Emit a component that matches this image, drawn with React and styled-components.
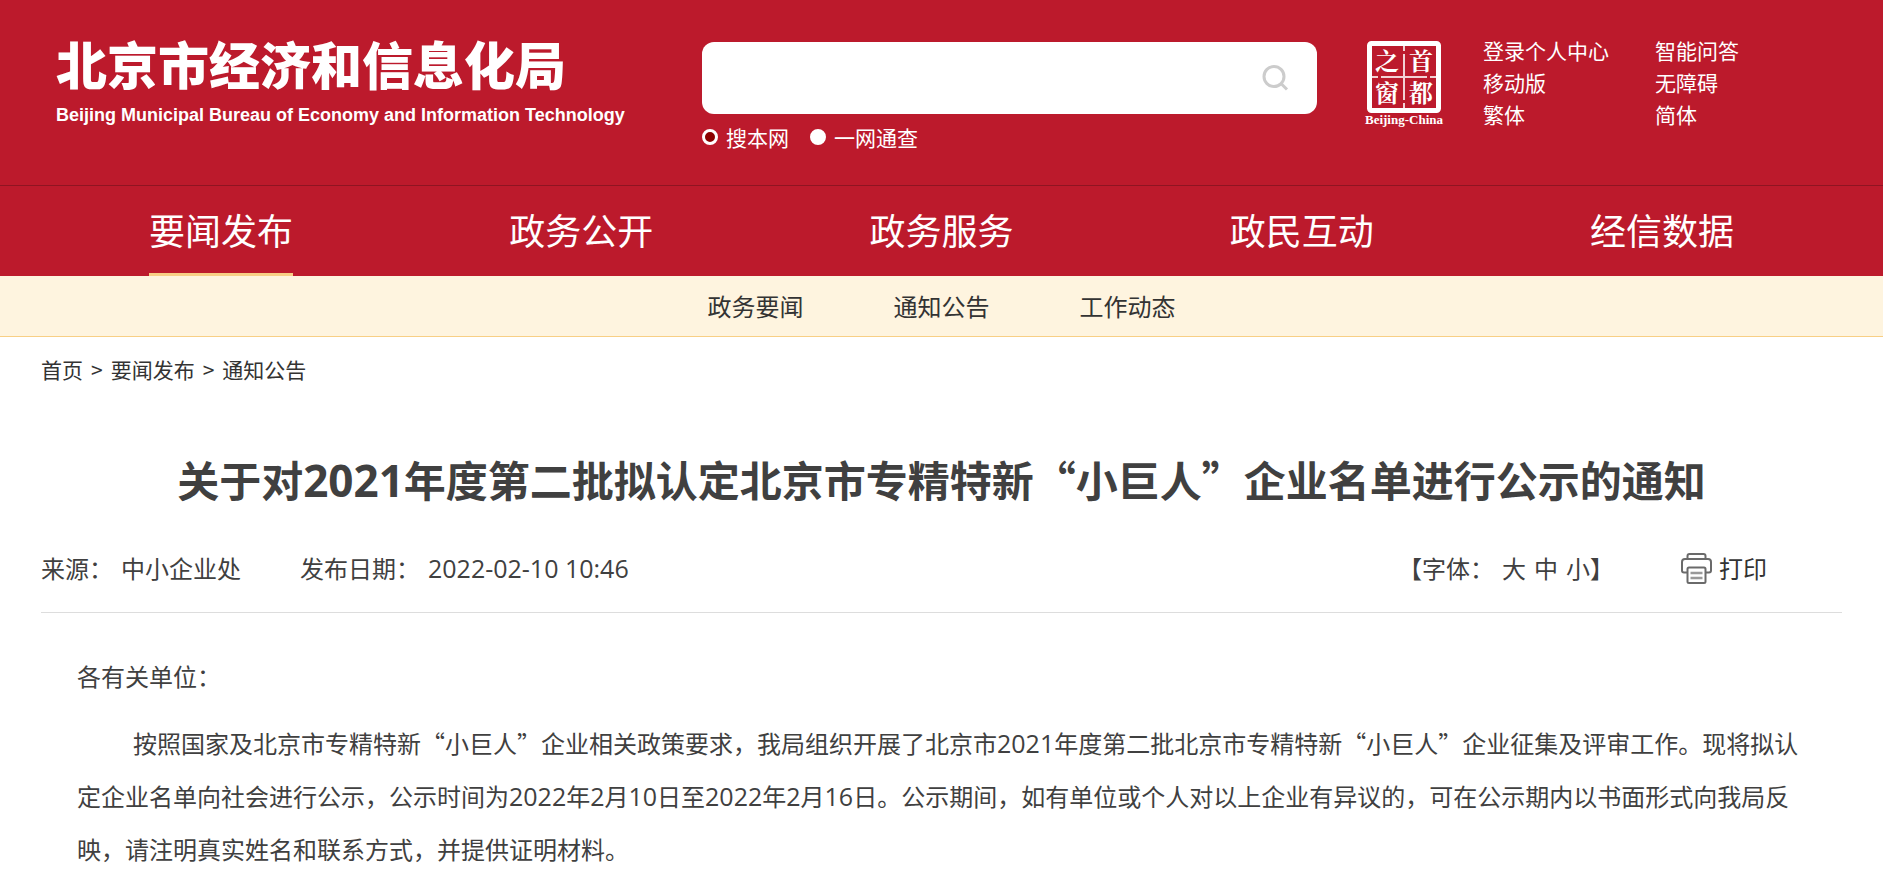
import { useState } from 'react';
import styled, { createGlobalStyle } from 'styled-components';

const GlobalStyle = createGlobalStyle`
  * {
    box-sizing: border-box;
  }

  body {
    margin: 0;

    color: #404040;
    background-color: #fff;

    font-family: 'Noto Sans CJK SC', sans-serif;
    font-size: 24px;
    line-height: 32px;
  }

  a {
    color: inherit;
    text-decoration: none;
  }

  button {
    padding: 0;
    border: 0;

    color: inherit;
    background: none;

    font: inherit;
    cursor: pointer;
  }
`;

const Header = styled.header`
  color: #fff;
  background-color: #bc1a2c;
`;

const HeaderTop = styled.div`
  display: grid;
  grid-template-columns: 646fr 615fr 566fr;

  height: 185px;
  padding: 34px 0 0 56px;
`;

const Brand = styled.a`
  display: flex;
  flex-direction: column;
  gap: 12px;

  padding-top: 3px;
`;

const BrandName = styled.span`
  font-size: 51px;
  font-weight: 900;
  line-height: 52px;
  white-space: nowrap;
`;

const BrandSub = styled.span`
  font-family: 'Liberation Sans', sans-serif;
  font-size: 18px;
  font-weight: 700;
  line-height: 28px;
  white-space: nowrap;
`;

const SearchForm = styled.form`
  display: flex;
  flex-direction: column;
  gap: 8px;

  padding-top: 8px;
`;

const SearchBox = styled.div`
  display: flex;
  align-items: center;

  height: 72px;
  padding: 0 28px;

  border-radius: 12px;
  background-color: #fff;
`;

const SearchInput = styled.input`
  flex: 1;
  min-width: 0;
  height: 48px;

  border: 0;
  outline: 0;

  font: inherit;
`;

const SearchButton = styled.button`
  display: flex;
`;

const Scopes = styled.div`
  display: flex;
  gap: 21px;
`;

const Scope = styled.label`
  display: flex;
  align-items: center;
  gap: 8px;

  font-size: 21px;
  line-height: 30px;
`;

const Radio = styled.input`
  appearance: none;

  height: 16px;
  width: 16px;
  margin: 0;

  border: 3px solid #fff;
  border-radius: 50%;
  background-color: #fff;

  &:checked {
    background-color: #8b0000;
  }
`;

const TopRight = styled.div`
  display: flex;
  align-items: flex-start;
  gap: 38px;

  padding-left: 46px;
`;

const EmblemLink = styled.a`
  display: flex;

  padding-top: 7px;
`;

const Links = styled.div`
  display: grid;
  grid-template-columns: auto auto;
  column-gap: 46px;

  font-size: 21px;
  white-space: nowrap;
`;

const Nav = styled.nav`
  display: grid;
  grid-template-columns: repeat(5, 1fr);
  justify-items: center;

  height: 91px;
  padding: 0 41px;

  border-top: 1px solid #8f1422;
`;

const NavLink = styled.a`
  border-bottom: 3px solid ${(props) => (props.$active ? '#f8cf85' : 'transparent')};

  font-size: 36px;
  line-height: 87px;
`;

const SubNav = styled.nav`
  display: flex;
  justify-content: center;
  gap: 90px;

  border-bottom: 1px solid #f8cf85;
  background-color: #fef4df;

  color: #333;
  line-height: 60px;
`;

const Main = styled.main`
  padding: 0 41px;
`;

const Breadcrumb = styled.nav`
  display: flex;
  gap: 8px;

  padding-top: 16px;

  color: #333;
  font-size: 21px;
`;

const Title = styled.h1`
  margin: 66px 0 0;

  font-size: 42px;
  line-height: 56px;
  text-align: center;
`;

// Latin digits, kept out of the CJK face
const Num = styled.span`
  font-family: 'Open Sans', sans-serif;
  font-size: ${(props) => (props.$large ? '44px' : '25px')};
  line-height: 1;
`;

const Meta = styled.div`
  display: flex;
  align-items: center;
  gap: 59px;

  margin-top: 17px;
  padding: 28px 75px 28px 0;

  border-bottom: 1px solid #ddd;
`;

const MetaItem = styled.div`
  display: flex;
  align-items: baseline;
  gap: 8px;
`;

const FontSizes = styled(MetaItem)`
  margin-left: auto;
  padding-right: 8px;
`;

const PrintButton = styled.button`
  display: flex;
  align-items: center;
  gap: 7px;

  color: #333;
`;

const Body = styled.article`
  padding: 36px 40px 0 36px;

  line-height: 53px;
`;

const Paragraph = styled.p`
  margin: 0 0 14px;

  text-indent: ${(props) => (props.$indent ? '56px' : '0')};
`;

const navItems = ['要闻发布', '政务公开', '政务服务', '政民互动', '经信数据'];
const subNavItems = ['政务要闻', '通知公告', '工作动态'];
const topLinks = ['登录个人中心', '智能问答', '移动版', '无障碍', '繁体', '简体'];
const scopes = ['搜本网', '一网通查'];

const SearchIcon = () => (
  <svg width="28" height="26" viewBox="0 0 28 26" fill="none" stroke="#ccc" strokeWidth="3">
    <circle cx="13" cy="11.500" r="10" />
    <path d="M20 18.500l6 6" />
  </svg>
);

const PrinterIcon = () => (
  <svg width="31" height="31" viewBox="0 0 31 31" fill="none" stroke="#6a6a6a" strokeWidth="2">
    <path d="M6.5 6V3q0-2 2-2h14q2 0 2 2v3" />
    <path d="M6 19.500H3q-2 0-2-2V9q0-3 3-3h23q3 0 3 3v8.500q0 2-2 2h-3" />
    <rect x="6.500" y="14.500" width="18" height="15.500" rx="1.500" />
    <path d="M9.500 20h12M9.500 25h12" stroke="#999" strokeWidth="2.500" />
  </svg>
);

const Emblem = () => (
  <svg width="82" height="88" viewBox="0 0 82 88" role="img" aria-label="首都之窗">
    <rect x="6.500" y="2.500" width="69" height="67" rx="2" fill="none" stroke="#fff" strokeWidth="5" />
    <path d="M41 5v5M41 13v46M41 62v6M9 36h6M18 36h46M67 36h6" stroke="#fff" strokeOpacity="0.8" strokeWidth="2" />
    <g fill="#fff" fontFamily="'Noto Serif CJK SC', 'Noto Sans CJK SC', serif" fontSize="24" fontWeight="700" textAnchor="middle">
      <text x="24" y="29">之</text>
      <text x="58" y="29">首</text>
      <text x="24" y="61">窗</text>
      <text x="58" y="61">都</text>
    </g>
    <text x="41" y="83" fill="#fff" fontFamily="'Liberation Serif', serif" fontSize="13" fontWeight="700" textAnchor="middle">
      Beijing-China
    </text>
  </svg>
);

const App = () => {
  const [scope, setScope] = useState(scopes[0]);

  return (
    <>
      <GlobalStyle />
      <Header>
        <HeaderTop>
          <Brand href="#">
            <BrandName>北京市经济和信息化局</BrandName>
            <BrandSub>Beijing Municipal Bureau of Economy and Information Technology</BrandSub>
          </Brand>
          <SearchForm onSubmit={(e) => e.preventDefault()}>
            <SearchBox>
              <SearchInput type="text" aria-label="搜索" />
              <SearchButton type="submit" aria-label="搜索">
                <SearchIcon />
              </SearchButton>
            </SearchBox>
            <Scopes>
              {scopes.map((item) => (
                <Scope key={item}>
                  <Radio type="radio" name="scope" checked={scope === item} onChange={() => setScope(item)} />
                  {item}
                </Scope>
              ))}
            </Scopes>
          </SearchForm>
          <TopRight>
            <EmblemLink href="#">
              <Emblem />
            </EmblemLink>
            <Links>
              {topLinks.map((item) => (
                <a key={item} href="#">
                  {item}
                </a>
              ))}
            </Links>
          </TopRight>
        </HeaderTop>
        <Nav>
          {navItems.map((item, index) => (
            <NavLink key={item} href="#" $active={index === 0}>
              {item}
            </NavLink>
          ))}
        </Nav>
      </Header>
      <SubNav>
        {subNavItems.map((item) => (
          <a key={item} href="#">
            {item}
          </a>
        ))}
      </SubNav>
      <Main>
        <Breadcrumb>
          <a href="#">首页</a>
          <span>&gt;</span>
          <a href="#">要闻发布</a>
          <span>&gt;</span>
          <a href="#">通知公告</a>
        </Breadcrumb>
        <Title>
          关于对<Num $large>2021</Num>年度第二批拟认定北京市专精特新“小巨人”企业名单进行公示的通知
        </Title>
        <Meta>
          <MetaItem>
            <span>来源：</span>
            <span>中小企业处</span>
          </MetaItem>
          <MetaItem>
            <span>发布日期：</span>
            <Num>2022-02-10 10:46</Num>
          </MetaItem>
          <FontSizes>
            <span>【字体：</span>
            <button type="button">大</button>
            <button type="button">中</button>
            <span>
              <button type="button">小</button>】
            </span>
          </FontSizes>
          <PrintButton type="button">
            <PrinterIcon />
            打印
          </PrintButton>
        </Meta>
        <Body>
          <Paragraph>各有关单位：</Paragraph>
          <Paragraph $indent>
            按照国家及北京市专精特新“小巨人”企业相关政策要求，我局组织开展了北京市<Num>2021</Num>
            年度第二批北京市专精特新“小巨人”企业征集及评审工作。现将拟认定企业名单向社会进行公示，公示时间为
            <Num>2022</Num>年<Num>2</Num>月<Num>10</Num>日至<Num>2022</Num>年<Num>2</Num>月<Num>16</Num>
            日。公示期间，如有单位或个人对以上企业有异议的，可在公示期内以书面形式向我局反映，请注明真实姓名和联系方式，并提供证明材料。
          </Paragraph>
        </Body>
      </Main>
    </>
  );
};

export default App;
